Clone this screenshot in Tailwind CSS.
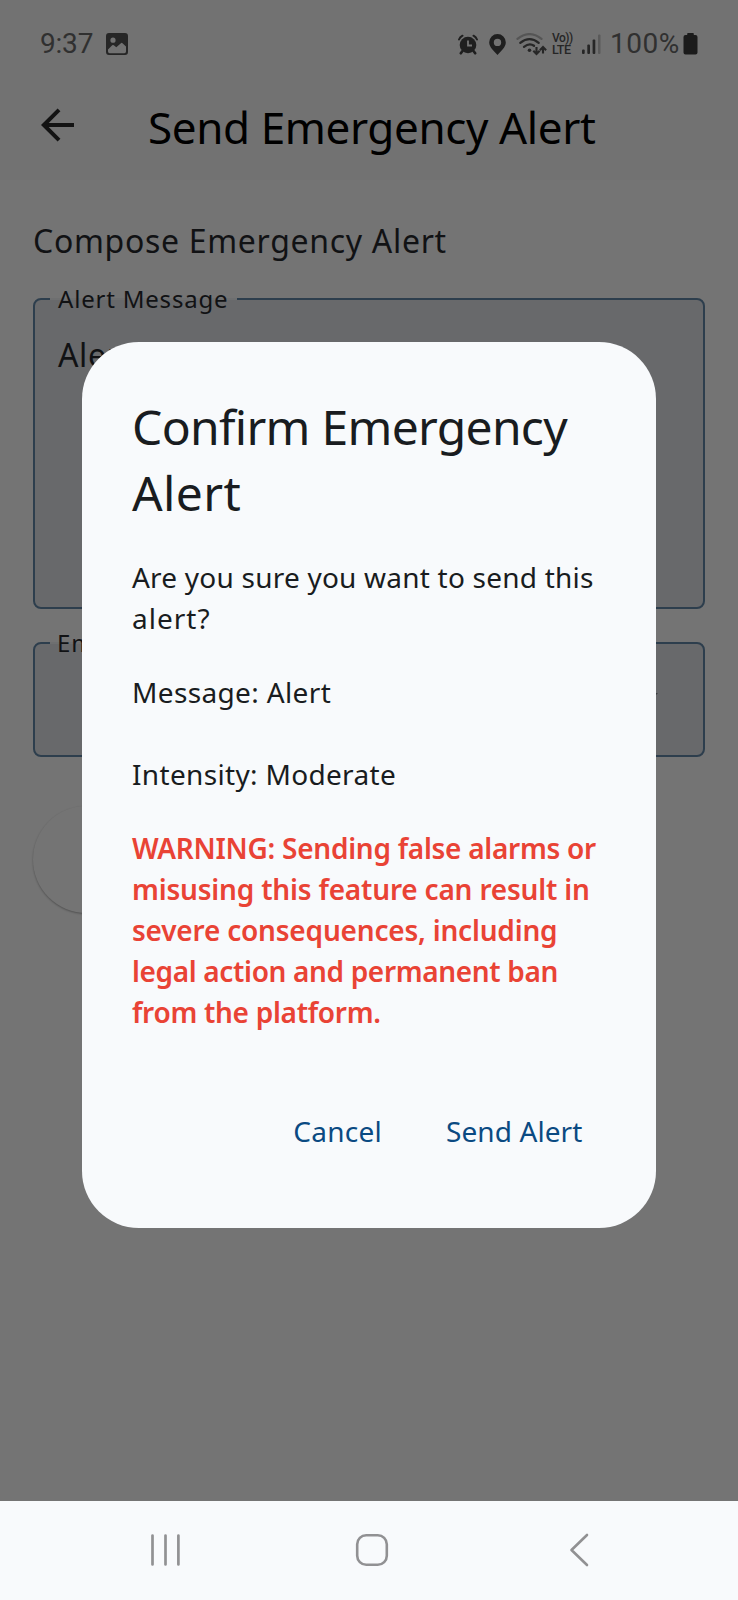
<!DOCTYPE html>
<html lang="en">
<head>
<meta charset="utf-8">
<title>Send Emergency Alert</title>
<script src="https://cdn.jsdelivr.net/npm/@tailwindcss/browser@4"></script>
</head>
<body class="bg-[#747474]">
<div class="relative flex h-[1600px] w-[738px] flex-col overflow-hidden bg-[#747474] font-['Noto_Sans','Open_Sans',sans-serif] text-[#111214]">

  <!-- Status bar -->
  <div class="flex h-[88px] shrink-0 items-center bg-[#727272] pl-10 pr-10 font-['Roboto',sans-serif] text-[28px] leading-[40px] text-[#303030]">
    <span class="w-[53px] whitespace-nowrap tracking-[-0.2px]">9:37</span>
    <svg class="ml-[13px] h-[22px] w-[22px]" viewBox="0 0 22 22"><path fill="#262626" fill-rule="evenodd" d="M3 0h16a3 3 0 0 1 3 3v16a3 3 0 0 1-3 3H3a3 3 0 0 1-3-3V3a3 3 0 0 1 3-3zM7 4.6a2.6 2.6 0 1 0 0 5.2 2.6 2.6 0 0 0 0-5.2zM2 16.500V18.500A1.700 1.700 0 0 0 3.700 20.200H18.300A1.700 1.700 0 0 0 20 18.500V13.500L16.500 10.200Q15.700 9.500 14.900 10.200L10.300 14.200 7.800 12.300Q7 11.700 6.200 12.300z"/></svg>
    <div class="ml-auto flex items-center">
      <svg class="h-[21px] w-[20px]" viewBox="0 0 20 21"><g fill="none" stroke="#1f1f1f" stroke-linecap="round"><path stroke-width="2" d="M1 5.500Q2 3 4.500 1.700M19 5.500Q18 3 15.500 1.700"/><path stroke-width="2.600" d="M4.500 17 2.800 19.300M15.500 17l1.700 2.300"/></g><circle cx="10" cy="11" r="8.300" fill="#1f1f1f"/><path d="M10 6.500V11.500H14" fill="none" stroke="#747474" stroke-width="1.800"/></svg>
      <svg class="ml-[11px] h-[21px] w-[17px]" viewBox="0 0 17 21"><path fill="#1f1f1f" fill-rule="evenodd" d="M8.500 0a8.300 8.300 0 0 1 8.300 8.300C16.800 13.500 12 17 8.500 21 5 17 .2 13.500.2 8.300A8.300 8.300 0 0 1 8.500 0zm0 4.700a3.700 3.700 0 1 0 0 7.400 3.700 3.700 0 0 0 0-7.400z"/></svg>
      <svg class="ml-[10px] h-[23px] w-[31px]" viewBox="0 0 31 23"><g fill="none" stroke-width="2.300" stroke-linecap="round"><path stroke="#555" d="M1.500 5.800Q13.500-3.500 25.500 5.800"/><path stroke="#262626" d="M4.300 9.800Q13.500 2.500 22.700 9.800M8 13.800Q13.500 9.500 18 12.800"/></g><circle cx="13.500" cy="17.300" r="1.800" fill="#262626"/><path fill="none" stroke="#262626" stroke-width="2.100" d="M20.500 14v6.500M17.300 17.700l3.200 3.300 3.200-3.300M27 20.500V14.500M23.900 17.200 27 14l3.100 3.200"/></svg>
      <div class="ml-[5px] flex w-[22px] flex-col font-medium leading-[11px] text-[#262626]">
        <span class="whitespace-nowrap text-[12px] tracking-[-0.5px]">Vo))</span>
        <span class="whitespace-nowrap text-[12.500px] tracking-[-0.4px]">LTE</span>
      </div>
      <svg class="ml-[8px] h-[20px] w-[19px]" viewBox="0 0 19 20"><g fill="#262626"><rect x="0" y="15.500" width="2.700" height="4.500" rx="1"/><rect x="5.300" y="10.500" width="2.700" height="9.500" rx="1"/><rect x="10.600" y="5.500" width="2.700" height="14.500" rx="1"/></g><rect x="16" y="0.500" width="2.500" height="19.500" rx="1" fill="#5a5a5a"/></svg>
      <span class="ml-[9px] w-[73px] whitespace-nowrap tracking-[0.5px]">100%</span>
      <svg class="h-[22px] w-[15px]" viewBox="0 0 15 22"><path fill="#1b1b1b" d="M5 0h5q.8 0 .8.8V2h1.700Q14.500 2 14.500 4v15.500q0 2-2 2h-10q-2 0-2-2V4q0-2 2-2H4.200V.8Q4.200 0 5 0z"/></svg>
    </div>
  </div>

  <!-- App bar -->
  <div class="h-[92px] shrink-0 bg-[#727272]">
    <div class="flex h-[77px] items-center pl-[41px]">
      <svg class="mb-[4px] h-[34px] w-[34px]" viewBox="0 0 34 34"><path fill="none" stroke="#131313" stroke-width="4" d="M33 17H3.500M18 1.800 2.800 17 18 32.200"/></svg>
      <h1 class="ml-[73px] mt-px whitespace-nowrap text-[44px] leading-[60px] tracking-[-0.39px] text-black">Send Emergency Alert</h1>
    </div>
  </div>

  <!-- Compose form -->
  <div class="flex flex-col px-[33px] pt-[41px]">
    <h2 class="whitespace-nowrap text-[32px] leading-10 tracking-[0.69px]">Compose Emergency Alert</h2>
    <div class="relative mt-[37px] h-[311px] rounded-lg border-2 border-[#2d3e4d] bg-[#68696b] pl-[23px] pt-[35px]">
      <span class="absolute -top-0.5 left-[15px] flex h-0.5 w-[187px] items-center bg-[#6e6f70] pl-[8px] text-[24px] leading-none tracking-[0.8px] whitespace-nowrap">Alert Message</span>
      <p class="text-[32px] leading-10 tracking-[0.67px]">Alert</p>
    </div>
    <div class="relative mt-[33px] flex h-[115px] items-center justify-end rounded-lg border-2 border-[#2d3e4d] bg-[#68696b] pr-[45px]">
      <span class="absolute -top-0.5 left-[15px] flex h-0.5 w-[120px] items-center bg-[#6e6f70] pl-[7px] text-[24px] leading-none tracking-[0.8px] whitespace-nowrap">Em</span>
      <svg class="mb-[4px] h-[10px] w-[20px]" viewBox="0 0 20 10"><path fill="#3a3c3f" d="M0 0h20L10 10z"/></svg>
    </div>
    <div class="mt-[49px] h-[107px] w-[560px] rounded-full bg-[#747474] shadow-[0_1px_2px_rgba(0,0,0,0.300)]"></div>
  </div>

  <!-- Navigation bar -->
  <div class="relative mt-auto flex h-[99px] shrink-0 items-center bg-[#f8fafc] pb-0.5 pl-[151px]">
    <svg class="h-[34px] w-[30px]" viewBox="0 0 30 34"><path fill="none" stroke="#919193" stroke-width="2.700" stroke-linecap="round" d="M1.500 2.500v29M14.500 2.500v29M27.400 2.500v29"/></svg>
    <svg class="ml-[174px] h-[34px] w-[34px]" viewBox="0 0 34 34"><rect x="2.200" y="2.200" width="29.600" height="29.600" rx="9" fill="none" stroke="#919193" stroke-width="2.600"/></svg>
    <svg class="ml-[180px] h-[34px] w-[20px]" viewBox="0 0 20 34"><path fill="none" stroke="#919193" stroke-width="2.600" stroke-linecap="round" stroke-linejoin="round" d="M18 2 2.500 17 18 32"/></svg>
  </div>

  <!-- Confirmation dialog -->
  <div class="absolute left-[82px] top-[341.500px] flex h-[886px] w-[574px] flex-col rounded-[57px] bg-[#f8fafc] px-[50px] pt-[52.500px] text-[28px] leading-[41px] text-[#191c20]">
    <h2 class="whitespace-nowrap text-[48px] leading-[66px]"><span class="tracking-[-0.7px]">Confirm Emergency</span><br><span class="tracking-[0.4px]">Alert</span></h2>
    <p class="mt-[31px] whitespace-nowrap"><span class="tracking-[0.22px]">Are you sure you want to send this</span><br><span class="tracking-[1px]">alert?</span></p>
    <p class="mt-[33px] whitespace-nowrap tracking-[0.36px]">Message: Alert</p>
    <p class="mt-[41px] whitespace-nowrap tracking-[0.33px]">Intensity: Moderate</p>
    <p class="mt-[33px] whitespace-nowrap font-semibold text-[#e94335]"><span class="tracking-[-0.270px]">WARNING: Sending false alarms or</span><br><span class="tracking-[-0.190px]">misusing this feature can result in</span><br><span class="tracking-[-0.200px]">severe consequences, including</span><br><span class="tracking-[-0.350px]">legal action and permanent ban</span><br><span class="tracking-[-0.290px]">from the platform.</span></p>
    <div class="mt-[78px] flex justify-end gap-4 leading-10 text-[#0a4a82]">
      <button class="px-6 tracking-[0.25px]">Cancel</button>
      <button class="pl-6 pr-[23.500px] tracking-[0.1px]">Send Alert</button>
    </div>
  </div>
</div>
</body>
</html>
